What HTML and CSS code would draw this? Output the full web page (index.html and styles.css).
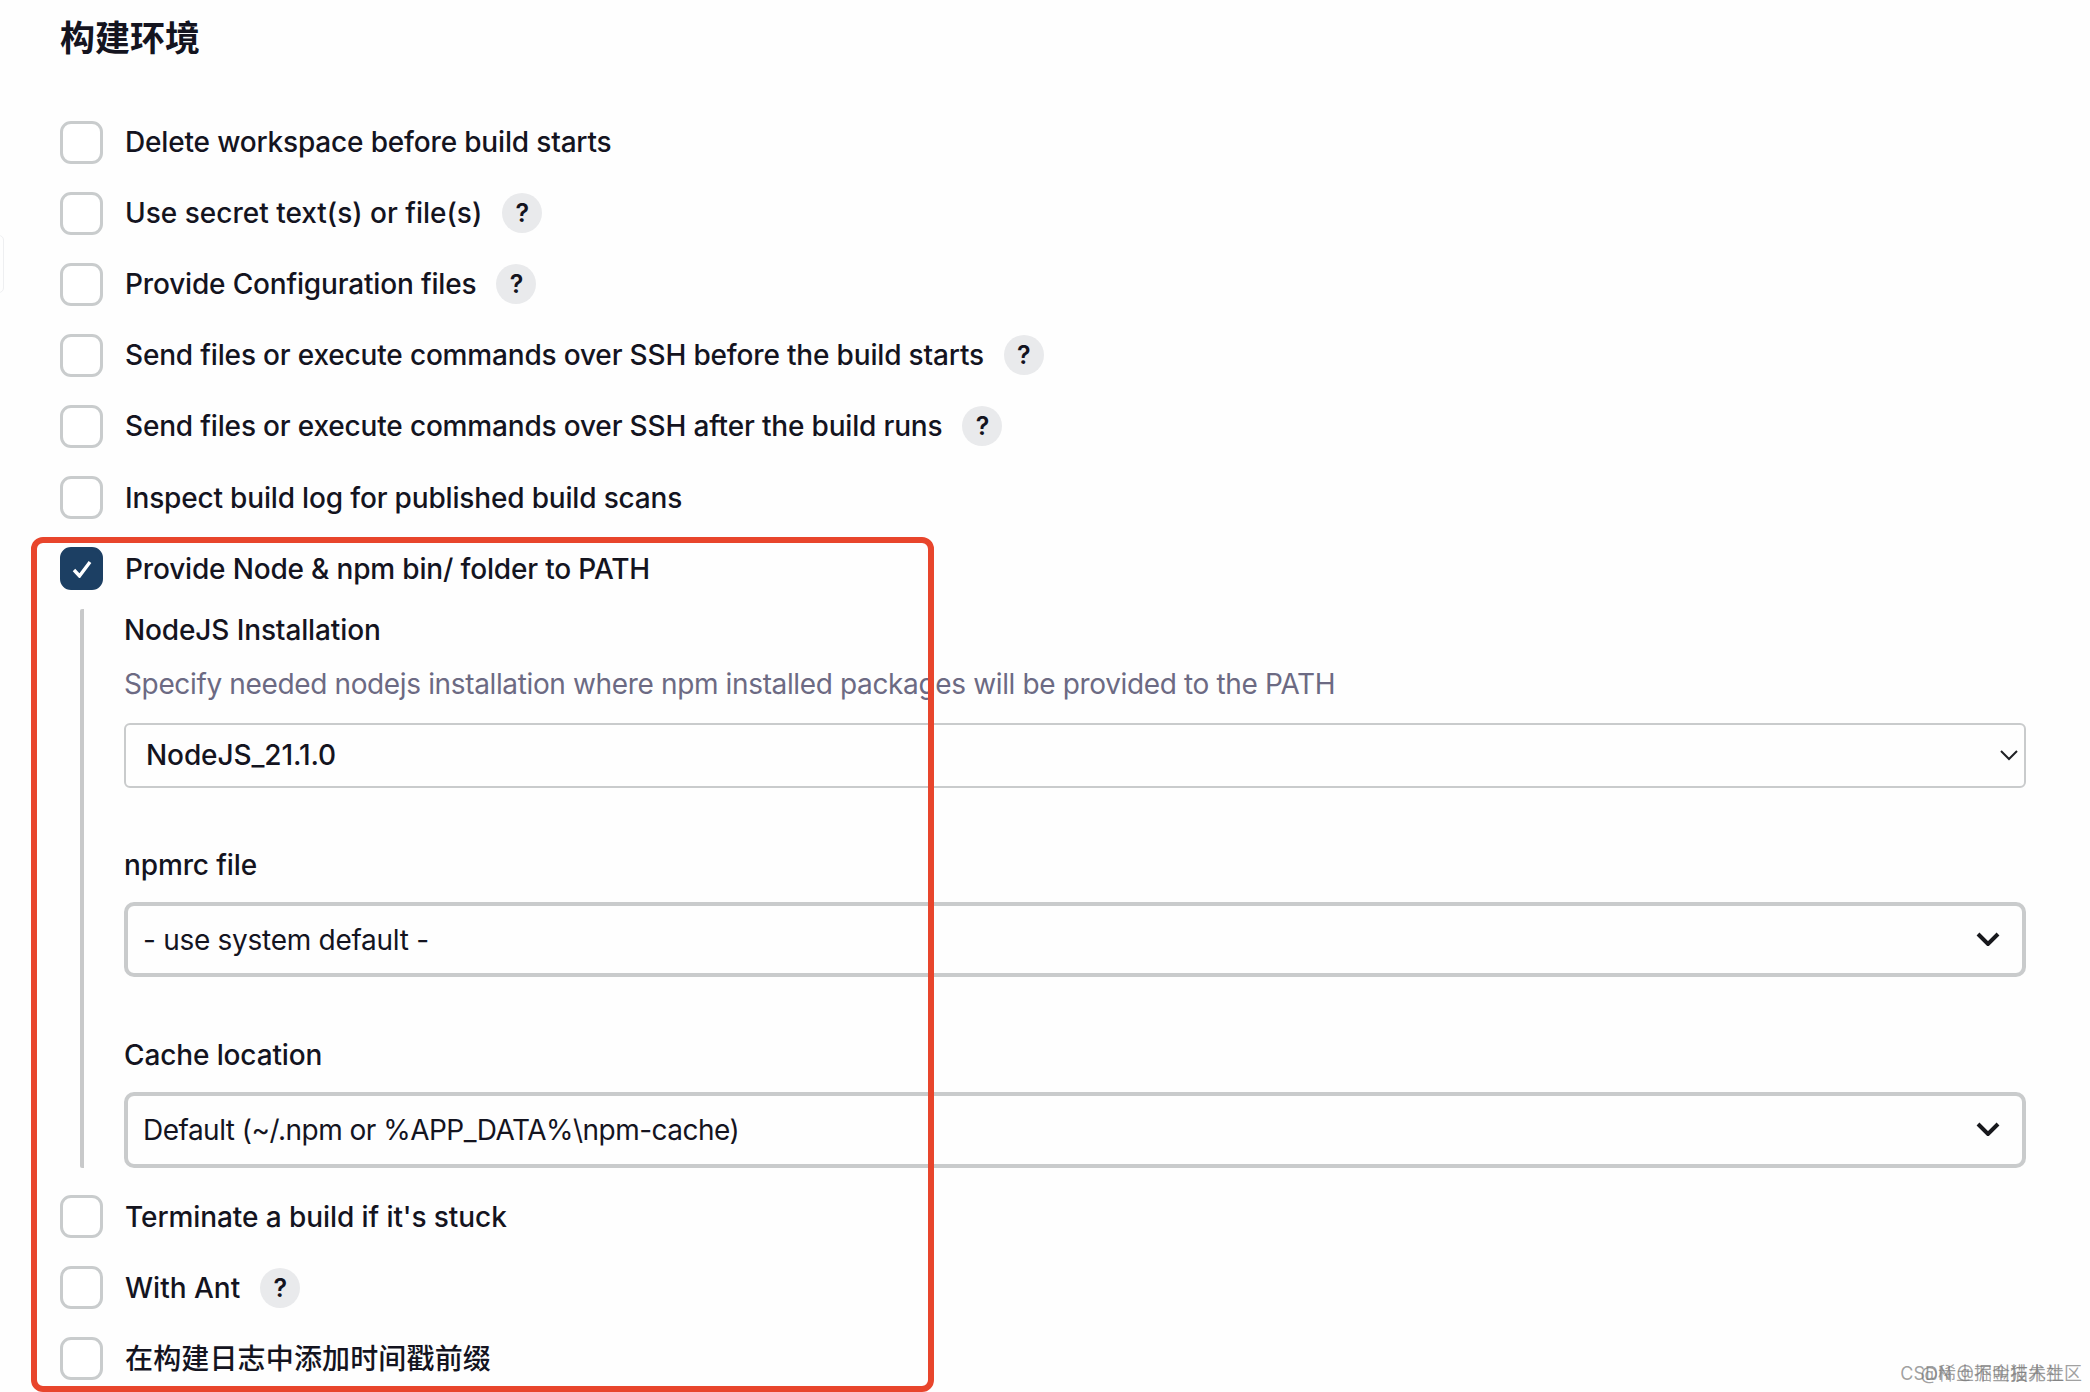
FILE: index.html
```html
<!DOCTYPE html>
<html lang="zh-CN">
<head>
<meta charset="utf-8">
<title>构建环境</title>
<link rel="stylesheet" href="styles.css">
</head>
<body>
<main class="page">
  <span class="edge-tab"></span>
  <h2 class="title">构建环境</h2>
  <div class="row"><span class="box"></span><span class="label">Delete workspace before build starts</span></div>
  <div class="row"><span class="box"></span><span class="label natural">Use secret text(s) or file(s)</span><span class="help">?</span></div>
  <div class="row"><span class="box"></span><span class="label">Provide Configuration files</span><span class="help">?</span></div>
  <div class="row"><span class="box"></span><span class="label">Send files or execute commands over SSH before the build starts</span><span class="help">?</span></div>
  <div class="row"><span class="box"></span><span class="label">Send files or execute commands over SSH after the build runs</span><span class="help">?</span></div>
  <div class="row"><span class="box"></span><span class="label">Inspect build log for published build scans</span></div>
  <div class="row"><span class="box checked"><svg class="tick" viewBox="0 0 20 18"><path d="M2 10l5.5 6L18 2" /></svg></span><span class="label">Provide Node &amp; npm bin/ folder to PATH</span></div>

  <section class="nested">
    <div class="field-label first">NodeJS Installation</div>
    <div class="desc">Specify needed nodejs installation where npm installed packages will be provided to the PATH</div>
    <div class="select thin"><span>NodeJS_21.1.0</span><svg class="chev-thin" viewBox="0 0 18 11"><path d="M1 1l8 8 8-8"/></svg></div>

    <div class="field-label second">npmrc file</div>
    <div class="select thick s2"><span>- use system default -</span><svg class="chev" viewBox="0 0 24 14"><path d="M2 2l10 10L22 2"/></svg></div>

    <div class="field-label third">Cache location</div>
    <div class="select thick s3"><span>Default (~/.npm or %APP_DATA%\npm-cache)</span><svg class="chev" viewBox="0 0 24 14"><path d="M2 2l10 10L22 2"/></svg></div>
  </section>

  <div class="row after"><span class="box"></span><span class="label tight">Terminate a build if it's stuck</span></div>
  <div class="row"><span class="box"></span><span class="label natural">With Ant</span><span class="help">?</span></div>
  <div class="row"><span class="box"></span><span class="label natural cjk">在构建日志中添加时间戳前缀</span></div>

  <div class="annotation"></div>
  <div class="wm wm-a">CSDN @不叫猫先生</div>
  <div class="wm wm-b">@稀土掘金技术社区</div>
</main>
</body>
</html>
```

FILE: styles.css
```css
* { box-sizing: border-box; }
html, body { margin: 0; padding: 0; }
body {
  width: 2090px;
  height: 1392px;
  overflow: hidden;
  background: #fefefe;
  color: #14141f;
  font-family: Inter, "Noto Sans CJK SC", sans-serif;
  font-size: 28px;
  font-weight: 500;
}
.page {
  position: relative;
  height: 1392px;
  padding: 0 64px 0 60px;
}
.edge-tab {
  position: absolute;
  left: -6px;
  top: 235px;
  width: 10px;
  height: 58px;
  border: 1px solid #eeeff1;
  border-radius: 6px;
}
.title {
  margin: 0;
  height: 106.5px;
  padding-top: 14px;
  font-size: 35px;
  line-height: 44px;
  font-weight: 700;
  font-family: "Noto Sans CJK SC", sans-serif;
}
.row {
  display: flex;
  align-items: center;
  height: 71.1px;
}
.row.after { margin-top: 13.5px; }
.box {
  flex: none;
  width: 43px;
  height: 43px;
  margin-right: 22px;
  border: 3.5px solid #c9cccd;
  border-radius: 11px;
  background: #fff;
  display: flex;
  align-items: center;
  justify-content: center;
}
.box.checked {
  background: #1c3f63;
  border-color: #1c3f63;
}
.tick {
  width: 20px;
  height: 18px;
  fill: none;
  stroke: #fff;
  stroke-width: 3.4;
}
.label {
  line-height: 40px;
  letter-spacing: -0.17px;
  white-space: nowrap;
}
.label.natural { letter-spacing: 0; }
.label.tight { letter-spacing: -0.08px; }
.label.cjk { letter-spacing: 0.15px; }
.help {
  flex: none;
  width: 40px;
  height: 40px;
  margin-left: 20px;
  border-radius: 50%;
  background: #e9eaec;
  font-size: 25px;
  font-weight: 600;
  line-height: 40px;
  text-align: center;
}
.nested {
  margin: 4.4px 0 0 20px;
  height: 559px;
  padding-left: 40px;
  border-left: 4px solid #c8c9ca;
  border-radius: 2px;
}
.field-label {
  line-height: 40px;
  letter-spacing: -0.12px;
  white-space: nowrap;
}
.field-label.first { line-height: 42px; }
.field-label.second { margin-top: 57px; }
.field-label.third { margin-top: 58px; }
.desc {
  margin-top: 12px;
  line-height: 42px;
  color: #6c6a83;
  font-weight: 400;
  letter-spacing: -0.36px;
  white-space: nowrap;
}
.select {
  display: flex;
  align-items: center;
  justify-content: space-between;
  background: #fefefe;
  white-space: nowrap;
}
.select.thin {
  margin-top: 18px;
  height: 65px;
  padding: 0 6px 0 20px;
  border: 2.5px solid #c9cbcc;
  border-radius: 6px;
}
.select.thin span { letter-spacing: -0.1px; }
.select.thick {
  margin-top: 17px;
  padding: 0 22px 0 15px;
  border: 4px solid #c9cbcc;
  border-radius: 10px;
  font-weight: 400;
}
.select.s2 { height: 75px; }
.select.s2 span { letter-spacing: -0.28px; transform: translateY(1px); }
.select.s3 { height: 76px; }
.select.s3 span { letter-spacing: -0.52px; }
.select.s3 svg { transform: translateY(-1px); }
.chev-thin {
  width: 18px;
  height: 11px;
  fill: none;
  stroke: #1f2024;
  stroke-width: 2;
}
.chev {
  width: 24px;
  height: 14px;
  fill: none;
  stroke: #17181c;
  stroke-width: 4;
}
.annotation {
  position: absolute;
  left: 31px;
  top: 537px;
  width: 903px;
  height: 855px;
  border: 6px solid #e8452c;
  border-radius: 12px;
  pointer-events: none;
}
.wm {
  position: absolute;
  top: 1362px;
  font-size: 18px;
  line-height: 24px;
  font-weight: 400;
  color: rgba(120, 120, 120, 0.7);
  white-space: nowrap;
}
.wm-a { right: 26px; }
.wm-b { right: 8px; }
```
